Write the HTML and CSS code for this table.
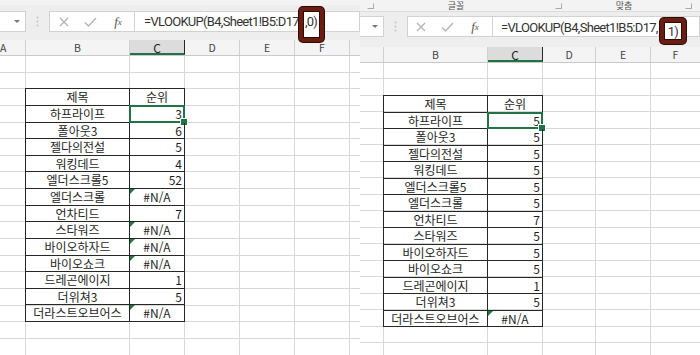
FILE: index.html
```html
<!DOCTYPE html>
<html lang="ko">
<head>
    <meta charset="UTF-8">
    <meta name="viewport" content="width=device-width, initial-scale=1.0">
    <title>VLOOKUP 비교</title>
    <link rel="stylesheet" href="styles.css">
</head>
<body>
<main class="shots">
    <!-- 왼쪽 화면: 마지막 인수 0 -->
    <section class="shot left">
        <div class="ribbon-tail"></div>
        <div class="fbar">
            <div class="namebox"><span class="drop"></span></div>
            <div class="grip"><svg width="3" height="11" viewBox="0 0 3 11"><circle cx="1.5" cy="1.5" r="1"/><circle cx="1.5" cy="5.5" r="1"/><circle cx="1.5" cy="9.5" r="1"/></svg></div>
            <div class="fxbox">
                <span class="ico"><svg width="10" height="10" viewBox="0 0 10 10"><path d="M1 1L9 9M9 1L1 9"/></svg></span>
                <span class="ico"><svg width="13" height="10" viewBox="0 0 13 10"><path d="M1 5.5L4.5 9L12 1"/></svg></span>
                <span class="ico fx"><i>f</i><sub>x</sub></span>
            </div>
            <div class="formula">=VLOOKUP(B4,Sheet1!B5:D17<span class="mark">,0)</span></div>
        </div>
        <div class="colhead">
            <div class="ch a">A</div>
            <div class="ch b">B</div>
            <div class="ch c on">C</div>
            <div class="ch d">D</div>
            <div class="ch e">E</div>
            <div class="ch f">F</div>
            <div class="ch g"></div>
        </div>
        <div class="sheet">
            <div class="tbl">
                <div class="c nm">제목</div><div class="c mid">순위</div>
                <div class="c nm">하프라이프</div><div class="c num sel">3</div>
                <div class="c nm">폴아웃3</div><div class="c num">6</div>
                <div class="c nm">젤다의전설</div><div class="c num">5</div>
                <div class="c nm">워킹데드</div><div class="c num">4</div>
                <div class="c nm">엘더스크롤5</div><div class="c num">52</div>
                <div class="c nm">엘더스크롤</div><div class="c mid err">#N/A</div>
                <div class="c nm">언차티드</div><div class="c num">7</div>
                <div class="c nm">스타워즈</div><div class="c mid err">#N/A</div>
                <div class="c nm">바이오하자드</div><div class="c mid err">#N/A</div>
                <div class="c nm">바이오쇼크</div><div class="c mid err">#N/A</div>
                <div class="c nm">드레곤에이지</div><div class="c num">1</div>
                <div class="c nm">더위쳐3</div><div class="c num">5</div>
                <div class="c nm">더라스트오브어스</div><div class="c mid err">#N/A</div>
            </div>
        </div>
    </section>

    <!-- 오른쪽 화면: 마지막 인수 1 -->
    <section class="shot right">
        <div class="ribbon">
            <div class="grp"><span class="launch"></span></div>
            <div class="grp"><span class="lbl l1">글꼴</span><span class="launch"></span></div>
            <div class="grp"><span class="lbl">맞춤</span><span class="launch"></span></div>
            <div class="grp"></div>
        </div>
        <div class="fbar">
            <div class="namebox"><span class="drop"></span></div>
            <div class="grip"><svg width="3" height="11" viewBox="0 0 3 11"><circle cx="1.5" cy="1.5" r="1"/><circle cx="1.5" cy="5.5" r="1"/><circle cx="1.5" cy="9.5" r="1"/></svg></div>
            <div class="fxbox">
                <span class="ico"><svg width="10" height="10" viewBox="0 0 10 10"><path d="M1 1L9 9M9 1L1 9"/></svg></span>
                <span class="ico"><svg width="13" height="10" viewBox="0 0 13 10"><path d="M1 5.5L4.5 9L12 1"/></svg></span>
                <span class="ico fx"><i>f</i><sub>x</sub></span>
            </div>
            <div class="formula">=VLOOKUP(B4,Sheet1!B5:D17,<span class="mark">1)</span></div>
        </div>
        <div class="colhead">
            <div class="ch a"></div>
            <div class="ch b">B</div>
            <div class="ch c on">C</div>
            <div class="ch d">D</div>
            <div class="ch e">E</div>
            <div class="ch f">F</div>
        </div>
        <div class="sheet">
            <div class="tbl">
                <div class="c nm">제목</div><div class="c mid">순위</div>
                <div class="c nm">하프라이프</div><div class="c num sel">5</div>
                <div class="c nm">폴아웃3</div><div class="c num">5</div>
                <div class="c nm">젤다의전설</div><div class="c num">5</div>
                <div class="c nm">워킹데드</div><div class="c num">5</div>
                <div class="c nm">엘더스크롤5</div><div class="c num">5</div>
                <div class="c nm">엘더스크롤</div><div class="c num">5</div>
                <div class="c nm">언차티드</div><div class="c num">7</div>
                <div class="c nm">스타워즈</div><div class="c num">5</div>
                <div class="c nm">바이오하자드</div><div class="c num">5</div>
                <div class="c nm">바이오쇼크</div><div class="c num">5</div>
                <div class="c nm">드레곤에이지</div><div class="c num">1</div>
                <div class="c nm">더위쳐3</div><div class="c num">5</div>
                <div class="c nm">더라스트오브어스</div><div class="c mid err">#N/A</div>
            </div>
        </div>
    </section>
</main>
</body>
</html>
```

FILE: styles.css
```css
*{
    margin: 0;
    padding: 0;
    box-sizing: border-box;
}
body{
    width: 700px;
    height: 355px;
    overflow: hidden;
    background: #fff;
    color: #222;
    font-family: "Noto Sans CJK KR", "Noto Sans", sans-serif;
}
.shots{
    display: flex;
    height: 355px;
}
.shot{
    display: flex;
    flex-direction: column;
    overflow: hidden;
}
.left{
    width: 360px;
    --row: 16.64px;
}
.right{
    width: 340px;
    --row: 16.5px;
}

/* 리본 아랫부분 */
.ribbon-tail{
    height: 5px;
    background: #f3f3f3;
}
.ribbon{
    height: 12px;
    background: #f3f3f3;
    border-bottom: 1px solid #dcdcdc;
    display: grid;
    grid-template-columns: 15px 188px 130px 1fr;
    font-size: 9px;
    line-height: 11px;
    color: #555;
}
.grp{
    display: flex;
    align-items: center;
}
.lbl{
    flex: 1;
    text-align: center;
}
.lbl.l1{
    padding-right: 18px;
}
.launch{
    width: 7px;
    height: 6px;
    margin: 0 1px 0 auto;
    border: 1px solid #aaa;
    border-top-color: transparent;
    border-left-color: transparent;
}

/* 수식 입력줄 */
.fbar{
    display: flex;
    align-items: flex-start;
    height: 35px;
    background: #eeeeee;
}
.left .fbar{
    padding-top: 6px;
}
.right .fbar{
    padding-top: 4px;
}
.namebox{
    height: 21px;
    background: #fff;
    border: 1px solid #d2d2d2;
    border-left: none;
    display: flex;
    align-items: center;
    justify-content: flex-end;
    padding-right: 5px;
}
.left .namebox{
    width: 26px;
}
.right .namebox{
    width: 24px;
}
.drop{
    width: 0;
    height: 0;
    border-left: 3px solid transparent;
    border-right: 3px solid transparent;
    border-top: 3px solid #777;
}
.grip{
    width: 23px;
    height: 21px;
    display: flex;
    align-items: center;
    justify-content: center;
    fill: #c4c4c4;
}
.fxbox{
    width: 86px;
    height: 21px;
    background: #fff;
    border: 1px solid #d2d2d2;
    display: flex;
    padding-left: 1px;
}
.right .fxbox{
    padding-left: 0;
}
.ico{
    width: 26px;
    display: flex;
    align-items: center;
    justify-content: center;
}
.ico svg{
    fill: none;
    stroke: #b3b3b3;
    stroke-width: 1.3;
}
.fx{
    font-family: "Liberation Serif", serif;
    font-size: 13px;
    color: #555;
    padding-left: 4px;
}
.fx sub{
    font-size: 9px;
    font-style: italic;
}
.formula{
    flex: 1;
    height: 21px;
    background: #fff;
    border: 1px solid #d2d2d2;
    border-left: none;
    padding-left: 9px;
    font-family: Roboto, "Noto Sans", sans-serif;
    font-size: 13px;
    letter-spacing: -0.7px;
    line-height: 19px;
    white-space: nowrap;
    color: #333;
}
.right .formula{
    padding-left: 8px;
    line-height: 21px;
}
.mark{
    display: inline-block;
    position: relative;
    z-index: 2;
    vertical-align: top;
    background: #fff;
    border: 4px solid #6c1d11;
    border-radius: 4px;
    box-shadow: 0 0 0 1px #2a0b05, inset 0 0 0 1px #2a0b05;
    padding: 0 3px 0 2px;
}
.left .mark{
    height: 35px;
    margin: -5px 0 -16px;
    line-height: 22px;
}
.right .mark{
    height: 26px;
    margin: 1px 0 -10px 2px;
    padding: 0 4px;
    line-height: 19px;
}

/* 열 머리글 */
.colhead{
    display: flex;
    height: 16px;
    background: #f4f4f4;
    border-bottom: 1px solid #c9c9c9;
    font-size: 10.5px;
    line-height: 15px;
    color: #444;
}
.ch{
    border-right: 1px solid #d0d0d0;
    text-align: center;
}
.ch.on{
    background: #dcdcdc;
    border-bottom: 2px solid #217346;
    color: #222;
}
.left .ch.a{
    width: 26px;
    text-align: right;
    padding-right: 22px;
}
.right .ch.a{
    width: 24px;
}
.ch.b{ width: 104px; }
.ch.c{ width: 55px; }
.ch.d{ width: 55px; }
.right .ch.d{ width: 53px; }
.ch.e{ width: 55px; }
.ch.f{ width: 55px; }
.right .ch.f{ flex: 1; border-right: none; }
.ch.g{ flex: 1; border-right: none; }

/* 시트 눈금선 */
.sheet{
    flex: 1;
    --grid: #d8d8d8;
}
.left .sheet{
    background:
        linear-gradient(var(--grid), var(--grid)) 25px 0 / 1px 100% no-repeat,
        linear-gradient(var(--grid), var(--grid)) 129px 0 / 1px 100% no-repeat,
        linear-gradient(var(--grid), var(--grid)) 184px 0 / 1px 100% no-repeat,
        linear-gradient(var(--grid), var(--grid)) 239px 0 / 1px 100% no-repeat,
        linear-gradient(var(--grid), var(--grid)) 294px 0 / 1px 100% no-repeat,
        linear-gradient(var(--grid), var(--grid)) 349px 0 / 1px 100% no-repeat,
        repeating-linear-gradient(to bottom, transparent 0 15.64px, var(--grid) 15.64px 16.64px);
}
.right .sheet{
    background:
        linear-gradient(var(--grid), var(--grid)) 23px 0 / 1px 100% no-repeat,
        linear-gradient(var(--grid), var(--grid)) 127px 0 / 1px 100% no-repeat,
        linear-gradient(var(--grid), var(--grid)) 182px 0 / 1px 100% no-repeat,
        linear-gradient(var(--grid), var(--grid)) 235px 0 / 1px 100% no-repeat,
        linear-gradient(var(--grid), var(--grid)) 290px 0 / 1px 100% no-repeat,
        repeating-linear-gradient(to bottom, transparent 0 15.5px, var(--grid) 15.5px 16.5px);
}

/* 표 */
.tbl{
    display: grid;
    grid-template-columns: 104px 55px;
    grid-auto-rows: var(--row);
    width: fit-content;
    border-top: 1px solid #262626;
    border-left: 1px solid #262626;
}
.left .tbl{
    margin: 32.28px 0 0 25px;
}
.right .tbl{
    margin: 32px 0 0 23px;
}
.c{
    position: relative;
    border-right: 1px solid #262626;
    border-bottom: 1px solid #262626;
    font-size: 12px;
    line-height: 15px;
    white-space: nowrap;
    color: #1e1e1e;
}
.nm, .mid{
    text-align: center;
}
.num{
    text-align: right;
    padding-right: 2px;
}
.sel::before{
    content: "";
    position: absolute;
    top: -1px;
    left: -1px;
    right: -1px;
    bottom: -1px;
    border: 2px solid #217346;
}
.sel::after{
    content: "";
    position: absolute;
    right: -4px;
    bottom: -4px;
    width: 6px;
    height: 6px;
    background: #217346;
    border: 1px solid #fff;
}
.err::before{
    content: "";
    position: absolute;
    top: 0;
    left: 0;
    border-top: 5px solid #1e7a3f;
    border-right: 5px solid transparent;
}
```
